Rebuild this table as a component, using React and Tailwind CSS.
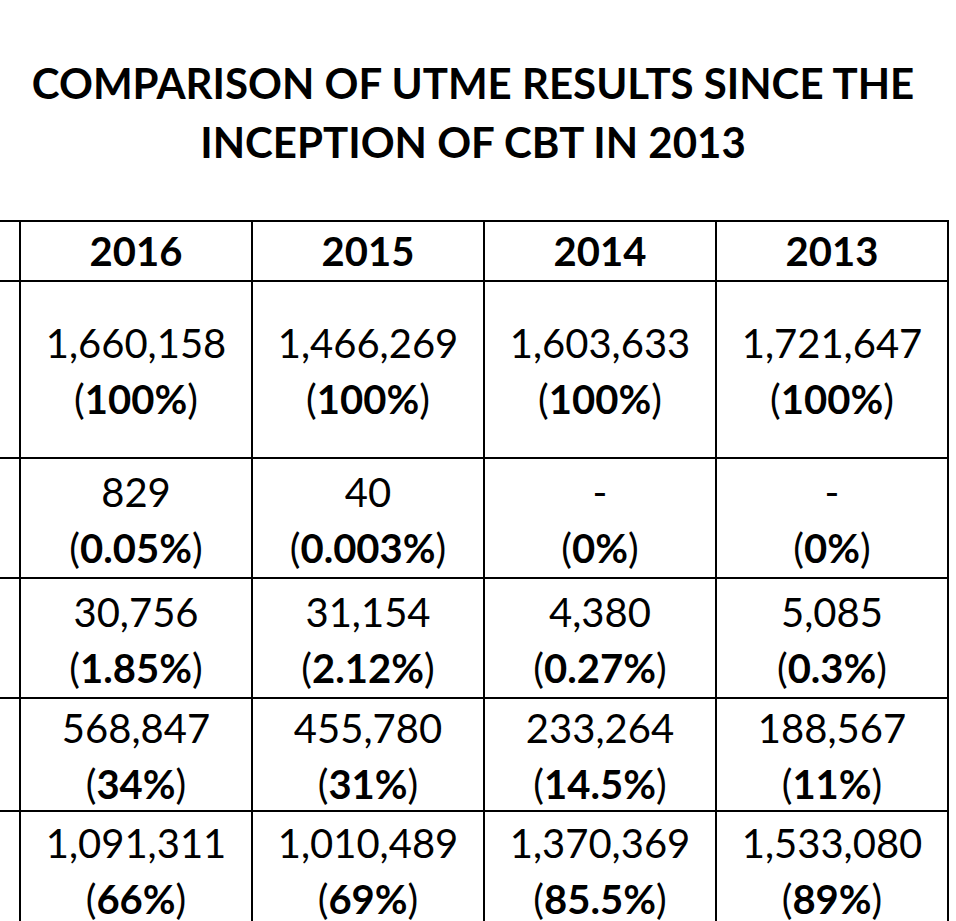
import React from 'react';

const years = ['2016', '2015', '2014', '2013'];

const rows = [
  {
    h: 'h-[177px]',
    cells: [
      ['1,660,158', '100%'],
      ['1,466,269', '100%'],
      ['1,603,633', '100%'],
      ['1,721,647', '100%'],
    ],
  },
  {
    h: 'h-[120px]',
    cells: [
      ['829', '0.05%'],
      ['40', '0.003%'],
      ['-', '0%'],
      ['-', '0%'],
    ],
  },
  {
    h: 'h-[120px]',
    cells: [
      ['30,756', '1.85%'],
      ['31,154', '2.12%'],
      ['4,380', '0.27%'],
      ['5,085', '0.3%'],
    ],
  },
  {
    h: 'h-[113px]',
    cells: [
      ['568,847', '34%'],
      ['455,780', '31%'],
      ['233,264', '14.5%'],
      ['188,567', '11%'],
    ],
  },
  {
    h: 'h-[116px]',
    cells: [
      ['1,091,311', '66%'],
      ['1,010,489', '69%'],
      ['1,370,369', '85.5%'],
      ['1,533,080', '89%'],
    ],
  },
];

const Cell = ({ value, pct, h }) => (
  <div className={`${h} border-r-2 border-b-2 border-black flex flex-col items-center justify-center pt-[3px] text-[40px] leading-[56px]`}>
    <span>{value}</span>
    <span>
      (<span className="font-bold">{pct}</span>)
    </span>
  </div>
);

const App = () => {
  return (
    <div
      className="h-[921px] w-[956px] overflow-hidden bg-white text-black"
      style={{ fontFamily: 'Lato, "Open Sans", sans-serif' }}
    >
      <h1 className="pt-[54px] pr-[10px] text-center text-[42px] font-bold leading-[59px]">
        COMPARISON OF UTME RESULTS SINCE THE
        <br />
        INCEPTION OF CBT IN 2013
      </h1>

      <div className="mt-[48px] grid w-fit grid-cols-[21px_repeat(4,232px)] border-t-2 border-black">
        {/* header row */}
        <div className="h-[60px] border-r-2 border-b-2 border-black" />
        {years.map((y) => (
          <div
            key={y}
            className="h-[60px] border-r-2 border-b-2 border-black flex items-center justify-center text-[40px] font-bold"
          >
            {y}
          </div>
        ))}

        {rows.map((row, i) => (
          <React.Fragment key={i}>
            <div className={`${row.h} border-r-2 border-b-2 border-black`} />
            {row.cells.map(([v, p], j) => (
              <Cell key={j} value={v} pct={p} h={row.h} />
            ))}
          </React.Fragment>
        ))}
      </div>
    </div>
  );
};

export default App;
